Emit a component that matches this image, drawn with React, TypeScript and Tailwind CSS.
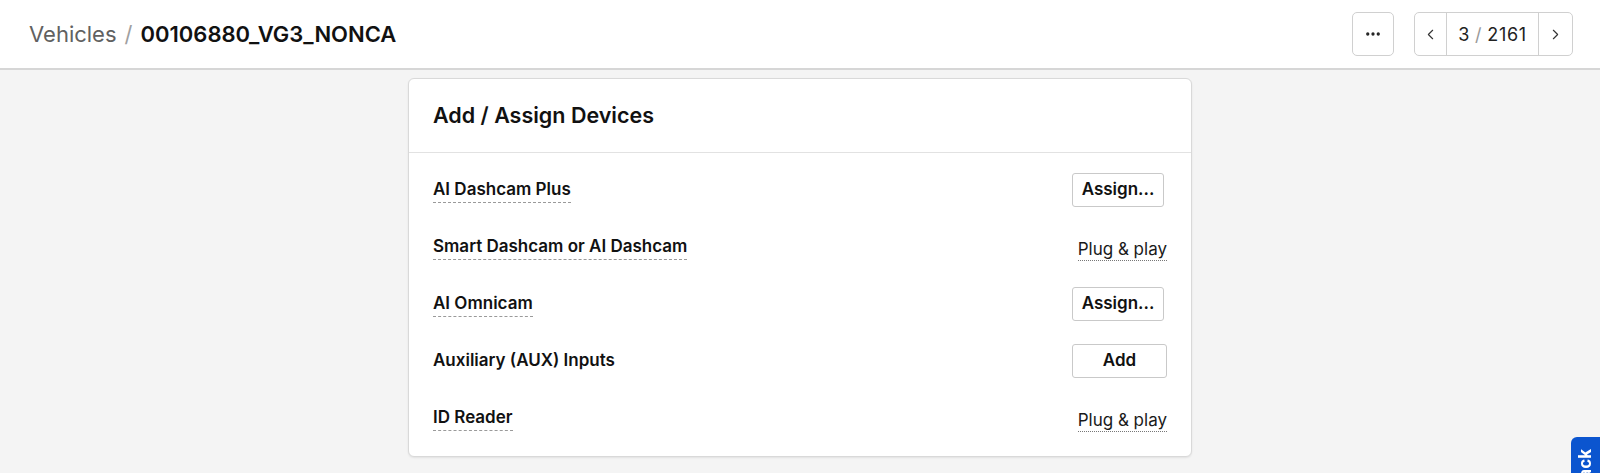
import React from 'react';
import { ChevronLeft, ChevronRight, Ellipsis } from 'lucide-react';

type Device = {
  name: string;
  underline: boolean;
  action: 'assign' | 'add' | 'plug';
};

const devices: Device[] = [
  { name: 'AI Dashcam Plus', underline: true, action: 'assign' },
  { name: 'Smart Dashcam or AI Dashcam', underline: true, action: 'plug' },
  { name: 'AI Omnicam', underline: true, action: 'assign' },
  { name: 'Auxiliary (AUX) Inputs', underline: false, action: 'add' },
  { name: 'ID Reader', underline: true, action: 'plug' },
];

const font = { fontFamily: 'Inter, "Noto Sans", sans-serif' };

const DeviceAction: React.FC<{ action: Device['action'] }> = ({ action }) => {
  if (action === 'plug') {
    return (
      <span className="text-[17px] text-[#1a1a1a] border-b border-dotted border-[#777] leading-[21px] mt-[7px]">
        Plug &amp; play
      </span>
    );
  }
  return (
    <div className="w-[95px] flex">
      <button
        className={
          'rounded-[3px] border border-[#c9c9c9] bg-white text-[17px] font-semibold text-[#111] ' +
          (action === 'add' ? 'w-[95px] h-[34px]' : 'w-[92px] h-[34px]')
        }
      >
        {action === 'add' ? 'Add' : 'Assign...'}
      </button>
    </div>
  );
};

export default function App() {
  return (
    <div className="min-h-screen bg-[#f4f4f4] text-[#111]" style={font}>
      {/* header */}
      <div className="h-[70px] bg-white border-b-2 border-[#d6d6d6] flex items-center justify-between pl-[29px] pr-[27px]">
        <div className="flex items-center gap-[8px] text-[22px] leading-none">
          <span className="text-[#616161]">Vehicles</span>
          <span className="text-[#a0a0a0]">/</span>
          <span className="font-semibold text-[#111]">00106880_VG3_NONCA</span>
        </div>
        <div className="flex items-center gap-[20px]">
          <button className="w-[42px] h-[44px] rounded-[5px] border border-[#d0d0d0] bg-white flex items-center justify-center">
            <Ellipsis size={18} strokeWidth={2.4} className="text-[#222]" />
          </button>
          <div className="h-[44px] flex rounded-[5px] border border-[#d0d0d0] bg-white">
            <button className="w-[32px] flex items-center justify-center border-r border-[#d0d0d0]">
              <ChevronLeft size={17} strokeWidth={1.6} className="text-[#333]" />
            </button>
            <div className="w-[92px] flex items-center justify-center text-[18px] tracking-[0.04em] text-[#222] border-r border-[#d0d0d0]">
              3<span className="text-[#999] mx-[5px]">/</span>2161
            </div>
            <button className="w-[33px] flex items-center justify-center">
              <ChevronRight size={17} strokeWidth={1.6} className="text-[#333]" />
            </button>
          </div>
        </div>
      </div>

      {/* content */}
      <div className="flex justify-center pt-[8px]">
        <div className="w-[784px] bg-white border border-[#d9d9d9] rounded-[6px] shadow-[0_1px_2px_rgba(0,0,0,0.08)]">
          <div className="h-[74px] flex items-center px-6 border-b border-[#e2e2e2]">
            <h2 className="text-[21.5px] font-semibold text-[#111]">Add / Assign Devices</h2>
          </div>
          <div className="px-6 pt-[8px] pb-[10px] flex flex-col">
            {devices.map((d) => (
              <div key={d.name} className="h-[57px] flex items-center justify-between">
                <span
                  className={
                    'text-[17px] font-semibold leading-[21px] ' +
                    (d.underline ? 'border-b border-dashed border-[#9a9a9a] pb-[2px] mt-[3px]' : '')
                  }
                >
                  {d.name}
                </span>
                <DeviceAction action={d.action} />
              </div>
            ))}
          </div>
        </div>
      </div>

      {/* feedback tab */}
      <div className="fixed right-0 top-[437px] w-[29px] h-[120px] bg-[#0b55cf] rounded-tl-[6px] flex justify-center">
        <span className="[writing-mode:vertical-rl] rotate-180 text-white font-bold text-[17px] mt-[12px] self-start">
          Feedback
        </span>
      </div>
    </div>
  );
}
